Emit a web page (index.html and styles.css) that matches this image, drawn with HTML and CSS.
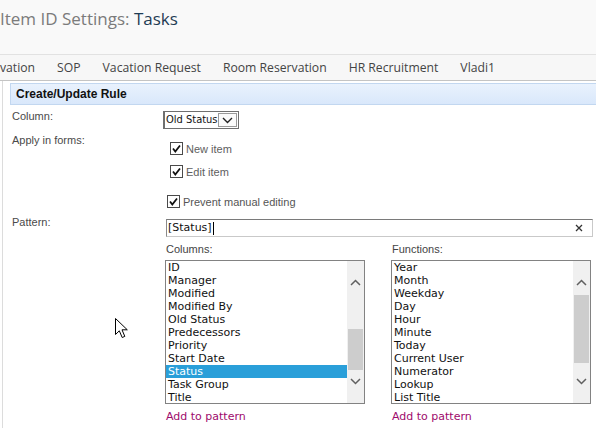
FILE: index.html
```html
<!DOCTYPE html>
<html lang="en">
<head>
<meta charset="utf-8">
<title>Item ID Settings: Tasks</title>
<link rel="stylesheet" href="styles.css">
</head>
<body>
<header class="header">
  <h1 class="title"><span class="title-pre">Item ID Settings:</span> <span class="title-list">Tasks</span></h1>
</header>
<nav class="nav">
  <a class="nav-item">vation</a>
  <a class="nav-item">SOP</a>
  <a class="nav-item">Vacation Request</a>
  <a class="nav-item">Room Reservation</a>
  <a class="nav-item">HR Recruitment</a>
  <a class="nav-item">Vladi1</a>
</nav>
<main class="main">
  <div class="rule-bar">Create/Update Rule</div>
  <div class="form">
    <div class="row row-column">
      <div class="label">Column:</div>
      <div class="control">
        <div class="select">
          <span class="select-text">Old Status</span>
          <span class="select-btn">
            <svg width="11" height="7" viewBox="0 0 11 7"><polyline points="1,1 5.5,5.5 10,1" fill="none" stroke="#222" stroke-width="1.4"/></svg>
          </span>
        </div>
      </div>
    </div>
    <div class="row row-apply">
      <div class="label">Apply in forms:</div>
      <div class="control control-apply">
        <label class="cb cb-first"><span class="box"><svg width="11" height="11" viewBox="0 0 11 11"><polyline points="2,5.5 4.3,8.5 9,2.5" fill="none" stroke="#111" stroke-width="1.8"/></svg></span><span class="cb-text">New item</span></label>
        <label class="cb cb-second"><span class="box"><svg width="11" height="11" viewBox="0 0 11 11"><polyline points="2,5.5 4.3,8.5 9,2.5" fill="none" stroke="#111" stroke-width="1.8"/></svg></span><span class="cb-text">Edit item</span></label>
        <label class="cb cb-prevent"><span class="box"><svg width="11" height="11" viewBox="0 0 11 11"><polyline points="2,5.5 4.3,8.5 9,2.5" fill="none" stroke="#111" stroke-width="1.8"/></svg></span><span class="cb-text">Prevent manual editing</span></label>
      </div>
    </div>
    <div class="row row-pattern">
      <div class="label">Pattern:</div>
      <div class="control">
        <div class="input">
          <span class="input-text">[Status]</span><span class="caret"></span>
          <span class="clear"><svg width="8" height="8" viewBox="0 0 8 8"><path d="M1 1L7 7M7 1L1 7" stroke="#333" stroke-width="1.3"/></svg></span>
        </div>
      </div>
    </div>
    <div class="row row-lists">
      <div class="label"></div>
      <div class="control lists">
        <div class="list-group">
          <div class="list-label">Columns:</div>
          <div class="listbox">
            <ul class="items">
              <li>ID</li>
              <li>Manager</li>
              <li>Modified</li>
              <li>Modified By</li>
              <li>Old Status</li>
              <li>Predecessors</li>
              <li>Priority</li>
              <li>Start Date</li>
              <li class="selected">Status</li>
              <li>Task Group</li>
              <li>Title</li>
            </ul>
            <div class="scrollbar">
              <div class="thumb" style="top:68px;height:41px"></div>
              <svg class="chev" width="11" height="7" viewBox="0 0 11 7"><polyline points="1,6 5.5,1.5 10,6" fill="none" stroke="#606060" stroke-width="1.5"/></svg>
              <svg class="chev" width="11" height="7" viewBox="0 0 11 7"><polyline points="1,1 5.5,5.5 10,1" fill="none" stroke="#606060" stroke-width="1.5"/></svg>
            </div>
          </div>
          <a class="add-link">Add to pattern</a>
        </div>
        <div class="list-group list-group-fn">
          <div class="list-label">Functions:</div>
          <div class="listbox">
            <ul class="items">
              <li>Year</li>
              <li>Month</li>
              <li>Weekday</li>
              <li>Day</li>
              <li>Hour</li>
              <li>Minute</li>
              <li>Today</li>
              <li>Current User</li>
              <li>Numerator</li>
              <li>Lookup</li>
              <li>List Title</li>
            </ul>
            <div class="scrollbar">
              <div class="thumb" style="top:34px;height:68px"></div>
              <svg class="chev" width="11" height="7" viewBox="0 0 11 7"><polyline points="1,6 5.5,1.5 10,6" fill="none" stroke="#606060" stroke-width="1.5"/></svg>
              <svg class="chev" width="11" height="7" viewBox="0 0 11 7"><polyline points="1,1 5.5,5.5 10,1" fill="none" stroke="#606060" stroke-width="1.5"/></svg>
            </div>
          </div>
          <a class="add-link">Add to pattern</a>
        </div>
      </div>
    </div>
  </div>
</main>
<svg class="cursor" width="14" height="21" viewBox="0 0 14 21"><path d="M0.5 0.5 L0.5 16.5 L4.3 12.8 L7.2 19.5 L9.8 18.4 L7 11.8 L12.3 11.8 Z" fill="#fff" stroke="#000" stroke-width="1" stroke-linejoin="miter"/></svg>
</body>
</html>
```

FILE: styles.css
```css
* { box-sizing: border-box; }
html, body { margin: 0; padding: 0; }
body {
  width: 596px;
  height: 428px;
  overflow: hidden;
  background: #fff;
  font-family: "Liberation Sans", Arial, sans-serif;
  position: relative;
}

.header {
  height: 54px;
  background: #f9f9f9;
  padding-top: 6px;
}
.title {
  margin: 0;
  font-family: "Open Sans", "Noto Sans", sans-serif;
  font-weight: 400;
  font-size: 17px;
  line-height: 26px;
  white-space: nowrap;
}
.title-pre { color: #7b7b7b; }
.title-list { color: #1f3c55; }

.nav {
  height: 27px;
  background: #f7f7f7;
  border-top: 1px solid #e2e2e2;
  border-bottom: 1px solid #c4c4c4;
  display: flex;
  align-items: center;
  gap: 22px;
  font-family: "Open Sans", "Noto Sans", sans-serif;
  font-size: 12.2px;
  color: #444;
  white-space: nowrap;
}
.nav-item { display: block; }

.main {
  margin-left: 2px;
  border-left: 1px solid #dcdcdc;
  padding-left: 7px;
  height: 347px;
  padding-top: 2px;
}

.rule-bar {
  height: 22px;
  background: linear-gradient(#e9f2fd, #d9e8fb);
  border: 1px solid #c2d7f0;
  border-right: none;
  padding-left: 5px;
  font-weight: bold;
  font-size: 12px;
  line-height: 20px;
  color: #111;
}

.row { display: flex; align-items: flex-start; }
.label {
  width: 153px;
  flex: none;
  padding-left: 2px;
  font-size: 11px;
  line-height: 13px;
  color: #4a4a4a;
}
.control { flex: 1; }

.row-column { margin-top: 6px; }
.row-column .label { margin-top: -1px; }
.select {
  display: flex;
  align-items: stretch;
  width: 76px;
  height: 18px;
  border: 1px solid #6f6f6f;
  border-left-width: 2px;
  background: #fff;
}
.select-text {
  flex: 1;
  font-family: "DejaVu Sans Condensed", "DejaVu Sans", sans-serif;
  font-size: 11px;
  line-height: 16px;
  padding-left: 1px;
  color: #111;
  white-space: nowrap;
}
.select-btn {
  width: 19px;
  margin: 1px 1px 1px 0;
  border: 1px solid #9a9a9a;
  display: flex;
  align-items: center;
  justify-content: center;
  background: #fbfbfb;
}

.row-apply { margin-top: 5px; }
.control-apply { padding-top: 8px; }
.cb {
  display: flex;
  align-items: center;
  height: 13px;
  font-size: 11px;
  color: #5e5e5e;
  white-space: nowrap;
}
.box {
  width: 13px;
  height: 13px;
  border: 1px solid #4a4a4a;
  background: #fff;
  display: flex;
  align-items: center;
  justify-content: center;
  margin-right: 3px;
}
.cb-first { margin-left: 7px; }
.cb-second { margin-left: 7px; margin-top: 10px; }
.cb-prevent { margin-left: 4px; margin-top: 17px; color: #555; }

.row-pattern { margin-top: 8px; }
.input {
  margin-top: 3px;
  margin-left: 3px;
  width: 427px;
  height: 18px;
  border: 1px solid #c9c9c9;
  border-top-color: #7a7a7a;
  border-left-color: #8a8a8a;
  display: flex;
  align-items: center;
  padding-left: 1px;
}
.input-text {
  font-family: "DejaVu Sans", sans-serif;
  font-size: 11px;
  color: #111;
  line-height: 14px;
}
.caret {
  width: 1px;
  height: 13px;
  background: #000;
  margin-left: 1px;
}
.clear {
  margin-left: auto;
  margin-right: 9px;
  display: flex;
}

.row-lists { margin-top: 6px; }
.lists { display: flex; padding-left: 2px; }
.list-group { width: 200px; }
.list-group-fn { margin-left: 26px; }
.list-label {
  padding-left: 1px;
  font-size: 11px;
  line-height: 13px;
  color: #444;
}
.listbox {
  margin-top: 4px;
  height: 144px;
  border: 1px solid #828282;
  display: flex;
  background: #fff;
}
.items {
  list-style: none;
  margin: 0;
  padding: 0;
  flex: 1;
  font-family: "DejaVu Sans", sans-serif;
  font-size: 11px;
  color: #111;
}
.items li {
  height: 13px;
  line-height: 13px;
  padding-left: 2px;
  white-space: nowrap;
}
.items li.selected { background: #2a9fd9; color: #fff; }
.scrollbar {
  width: 17px;
  flex: none;
  background: #f0f0f0;
  position: relative;
  display: flex;
  flex-direction: column;
  justify-content: space-between;
  align-items: center;
  padding: 18px 0 18px;
}
.thumb {
  position: absolute;
  left: 1px;
  right: 1px;
  background: #cdcdcd;
}
.chev { position: relative; display: block; }

.add-link {
  display: block;
  margin-top: 6px;
  padding-left: 1px;
  font-family: "DejaVu Sans", sans-serif;
  font-size: 11px;
  line-height: 13px;
  color: #9e0a6c;
}

.cursor {
  position: absolute;
  left: 115px;
  top: 318px;
}
```
